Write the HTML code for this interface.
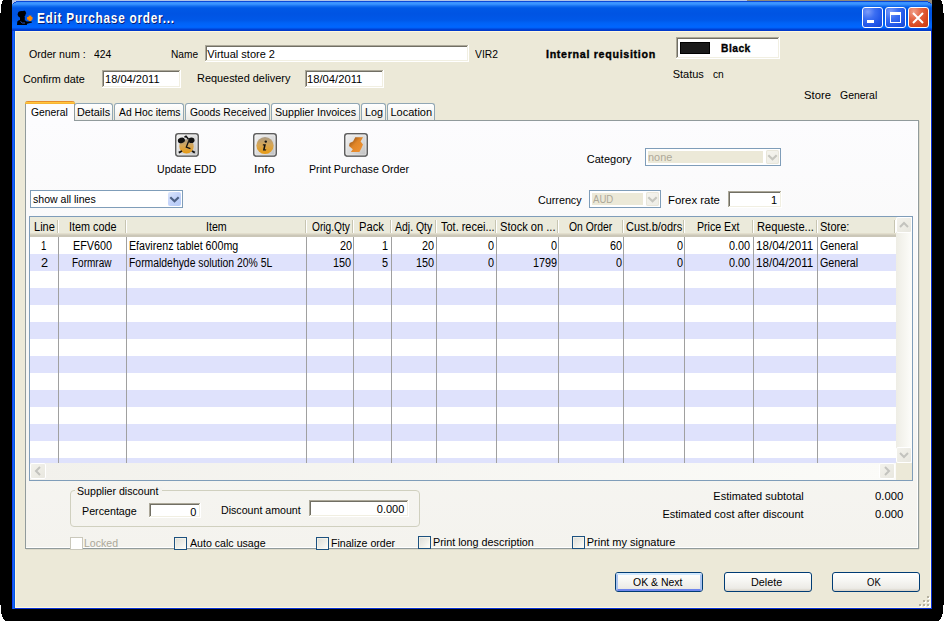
<!DOCTYPE html>
<html><head><meta charset="utf-8"><style>
html,body{margin:0;padding:0;width:944px;height:621px;overflow:hidden;background:#000;position:relative}
.a{position:absolute}
.t{position:absolute;font-family:"Liberation Sans",sans-serif;white-space:pre;transform-origin:0 0;color:#000}
</style></head><body>
<div class="a" style="left:12px;top:0px;width:920px;height:609px;background:#0831D9"></div><div class="a" style="left:12px;top:0;width:920px;height:31px;background:linear-gradient(to bottom,#B4C4E4 0px,#B4C4E4 1px,#0A48D8 1px,#0A48D8 2px,#3A93FF 2px,#3C95FF 4px,#2A83FA 5px,#1570F0 6px,#0A63EA 7px,#0058E6 8px,#0054E3 14px,#0058E8 20px,#0062F6 23px,#0066FF 27px,#0060F5 28px,#0044D8 29px,#0036C8 31px)"></div><div class="a" style="left:747px;top:0px;width:185px;height:1px;background:#908878"></div><div class="a" style="left:12px;top:1px;width:4px;height:1px;background:#B4C4E4"></div><div class="a" style="left:12px;top:2px;width:2px;height:1px;background:#B4C4E4"></div><div class="a" style="left:12px;top:3px;width:1px;height:1px;background:#B4C4E4"></div><div class="a" style="left:14px;top:2px;width:2px;height:1px;background:#0A48D8"></div><div class="a" style="left:13px;top:3px;width:1px;height:1px;background:#0A48D8"></div><div class="a" style="left:928px;top:1px;width:4px;height:1px;background:#908878"></div><div class="a" style="left:930px;top:2px;width:2px;height:1px;background:#908878"></div><div class="a" style="left:931px;top:3px;width:1px;height:1px;background:#908878"></div><div class="a" style="left:928px;top:2px;width:2px;height:1px;background:#0A48D8"></div><div class="a" style="left:930px;top:3px;width:1px;height:1px;background:#0A48D8"></div><div class="a" style="left:0px;top:0px;width:3px;height:1px;background:#fff"></div><div class="a" style="left:0px;top:1px;width:2px;height:3px;background:#fff"></div><div class="a" style="left:0px;top:4px;width:1px;height:9px;background:#fff"></div><div class="a" style="left:941px;top:0px;width:3px;height:1px;background:#fff"></div><div class="a" style="left:942px;top:1px;width:2px;height:3px;background:#fff"></div><div class="a" style="left:943px;top:4px;width:1px;height:9px;background:#fff"></div><div class="a" style="left:0px;top:605px;width:1px;height:9px;background:#fff"></div><div class="a" style="left:0px;top:614px;width:2px;height:3px;background:#fff"></div><div class="a" style="left:0px;top:617px;width:3px;height:2px;background:#fff"></div><div class="a" style="left:0px;top:619px;width:4px;height:1px;background:#fff"></div><div class="a" style="left:0px;top:620px;width:5px;height:1px;background:#fff"></div><div class="a" style="left:943px;top:605px;width:1px;height:9px;background:#fff"></div><div class="a" style="left:942px;top:614px;width:2px;height:3px;background:#fff"></div><div class="a" style="left:941px;top:617px;width:3px;height:2px;background:#fff"></div><div class="a" style="left:940px;top:619px;width:4px;height:1px;background:#fff"></div><div class="a" style="left:939px;top:620px;width:5px;height:1px;background:#fff"></div><div class="a" style="left:12px;top:31px;width:1px;height:578px;background:#0D3EF5"></div><div class="a" style="left:13px;top:31px;width:1px;height:578px;background:#166AEF"></div><div class="a" style="left:14px;top:31px;width:1px;height:578px;background:#0552E3"></div><div class="a" style="left:15px;top:31px;width:916px;height:577px;background:#FFF8DD"></div><div class="a" style="left:16px;top:32px;width:914px;height:575px;background:#ECE9D8"></div><svg class="a" style="left:14px;top:8px" width="22" height="20" viewBox="0 0 22 20">
<ellipse cx="7.6" cy="6.3" rx="3.9" ry="3.4" fill="#000"/>
<path d="M5.5 4.5 L10.3 2.6 L11.2 3.2 L12.3 5.2 L9.5 7.5 Z" fill="#000"/>
<rect x="6" y="9" width="4.8" height="3.5" fill="#000"/>
<path d="M3 17 L3.3 13.6 Q4.2 12 7.5 11.8 L11 12.2 L12.8 13.6 L17.6 13.4 L18 14.4 L13.2 15.8 L12.8 17 Z" fill="#000"/>
<path d="M6.5 13.5 Q8 15.8 11 15" stroke="#2A5BD8" stroke-width="0.9" fill="none"/>
<rect x="14.6" y="7.6" width="2.8" height="5.4" fill="#FF8A00"/>
<rect x="13.1" y="9" width="5.4" height="2.7" fill="#FF8A00"/>
</svg><div class="a" style="left:862px;top:7px;width:19px;height:19px;border:1px solid #fff;border-radius:3px;background:radial-gradient(circle at 25% 20%, #7C9CF9 0%, #3B6EF2 35%, #1F55E8 70%, #1646D2 100%)"></div><div class="a" style="left:867px;top:20px;width:7px;height:3px;background:#fff"></div><div class="a" style="left:885px;top:7px;width:19px;height:19px;border:1px solid #fff;border-radius:3px;background:radial-gradient(circle at 25% 20%, #7C9CF9 0%, #3B6EF2 35%, #1F55E8 70%, #1646D2 100%)"></div><div class="a" style="left:890px;top:12px;width:9px;height:7px;border:1px solid #fff;border-top:3px solid #fff"></div><div class="a" style="left:908px;top:7px;width:19px;height:19px;border:1px solid #fff;border-radius:3px;background:radial-gradient(circle at 25% 20%, #F0A08A 0%, #E46645 35%, #D9471F 70%, #C93B12 100%)"></div><svg class="a" style="left:912px;top:12px" width="12" height="12" viewBox="0 0 12 12"><path d="M1 1 L11 11 M11 1 L1 11" stroke="#fff" stroke-width="2"/></svg><div class="a" style="left:205px;top:45px;width:264px;height:17px;background:#fff"></div><div class="a" style="left:205px;top:45px;width:263px;height:1px;background:#ACA899"></div><div class="a" style="left:205px;top:45px;width:1px;height:16px;background:#ACA899"></div><div class="a" style="left:206px;top:46px;width:261px;height:1px;background:#716F64"></div><div class="a" style="left:206px;top:46px;width:1px;height:14px;background:#716F64"></div><div class="a" style="left:206px;top:60px;width:262px;height:1px;background:#F1EFE2"></div><div class="a" style="left:467px;top:46px;width:1px;height:15px;background:#F1EFE2"></div><div class="a" style="left:102px;top:70px;width:79px;height:18px;background:#fff"></div><div class="a" style="left:102px;top:70px;width:78px;height:1px;background:#ACA899"></div><div class="a" style="left:102px;top:70px;width:1px;height:17px;background:#ACA899"></div><div class="a" style="left:103px;top:71px;width:76px;height:1px;background:#716F64"></div><div class="a" style="left:103px;top:71px;width:1px;height:15px;background:#716F64"></div><div class="a" style="left:103px;top:86px;width:77px;height:1px;background:#F1EFE2"></div><div class="a" style="left:179px;top:71px;width:1px;height:16px;background:#F1EFE2"></div><div class="a" style="left:305px;top:70px;width:79px;height:18px;background:#fff"></div><div class="a" style="left:305px;top:70px;width:78px;height:1px;background:#ACA899"></div><div class="a" style="left:305px;top:70px;width:1px;height:17px;background:#ACA899"></div><div class="a" style="left:306px;top:71px;width:76px;height:1px;background:#716F64"></div><div class="a" style="left:306px;top:71px;width:1px;height:15px;background:#716F64"></div><div class="a" style="left:306px;top:86px;width:77px;height:1px;background:#F1EFE2"></div><div class="a" style="left:382px;top:71px;width:1px;height:16px;background:#F1EFE2"></div><div class="a" style="left:676px;top:37px;width:104px;height:22px;background:#fff"></div><div class="a" style="left:676px;top:37px;width:103px;height:1px;background:#ACA899"></div><div class="a" style="left:676px;top:37px;width:1px;height:21px;background:#ACA899"></div><div class="a" style="left:677px;top:38px;width:101px;height:1px;background:#716F64"></div><div class="a" style="left:677px;top:38px;width:1px;height:19px;background:#716F64"></div><div class="a" style="left:677px;top:57px;width:102px;height:1px;background:#F1EFE2"></div><div class="a" style="left:778px;top:38px;width:1px;height:20px;background:#F1EFE2"></div><div class="a" style="left:680px;top:42px;width:30px;height:12px;box-sizing:border-box;border:1px solid #000;background:#1A1A1A"></div><div class="a" style="left:25px;top:120px;width:894px;height:429px;background:#919B9C"></div><div class="a" style="left:26px;top:121px;width:892px;height:427px;background:linear-gradient(to bottom,#FCFCFE 0%,#F4F3EE 100%)"></div><div class="a" style="left:917px;top:121px;width:1px;height:427px;background:#fff"></div><div class="a" style="left:26px;top:547px;width:892px;height:1px;background:#fff"></div><div class="a" style="left:919px;top:121px;width:1px;height:428px;background:#DCD9C8"></div><div class="a" style="left:26px;top:549px;width:893px;height:1px;background:#DCD9C8"></div><div class="a" style="left:74px;top:103px;width:37px;height:16px;border:1px solid #91A7B4;border-bottom:none;border-radius:3px 3px 0 0;background:linear-gradient(to bottom,#FFFFFF 0%,#F7F7F4 50%,#ECEBE6 100%)"></div><div class="a" style="left:114px;top:103px;width:68px;height:16px;border:1px solid #91A7B4;border-bottom:none;border-radius:3px 3px 0 0;background:linear-gradient(to bottom,#FFFFFF 0%,#F7F7F4 50%,#ECEBE6 100%)"></div><div class="a" style="left:185px;top:103px;width:83px;height:16px;border:1px solid #91A7B4;border-bottom:none;border-radius:3px 3px 0 0;background:linear-gradient(to bottom,#FFFFFF 0%,#F7F7F4 50%,#ECEBE6 100%)"></div><div class="a" style="left:271px;top:103px;width:87px;height:16px;border:1px solid #91A7B4;border-bottom:none;border-radius:3px 3px 0 0;background:linear-gradient(to bottom,#FFFFFF 0%,#F7F7F4 50%,#ECEBE6 100%)"></div><div class="a" style="left:361px;top:103px;width:23px;height:16px;border:1px solid #91A7B4;border-bottom:none;border-radius:3px 3px 0 0;background:linear-gradient(to bottom,#FFFFFF 0%,#F7F7F4 50%,#ECEBE6 100%)"></div><div class="a" style="left:387px;top:103px;width:46px;height:16px;border:1px solid #91A7B4;border-bottom:none;border-radius:3px 3px 0 0;background:linear-gradient(to bottom,#FFFFFF 0%,#F7F7F4 50%,#ECEBE6 100%)"></div><div class="a" style="left:25px;top:101px;width:48px;height:20px;border:1px solid #919B9C;border-bottom:none;border-top:none;border-radius:3px 3px 0 0;background:#FCFCFE"></div><div class="a" style="left:25px;top:101px;width:50px;height:3px;border-radius:3px 3px 0 0;background:linear-gradient(to bottom,#E68B2C 0,#E68B2C 1px,#FFC73C 1px,#FFC73C 2px,#F7B335 2px)"></div><svg width="0" height="0" style="position:absolute"><defs><linearGradient id="ibg" x1="0" y1="0" x2="1" y2="1"><stop offset="0" stop-color="#F2F2F2"/><stop offset="0.55" stop-color="#DADADA"/><stop offset="1" stop-color="#BDBDBD"/></linearGradient><linearGradient id="org" x1="0" y1="0" x2="0" y2="1"><stop offset="0" stop-color="#A89A86"/><stop offset="0.45" stop-color="#D6A656"/><stop offset="1" stop-color="#E89A10"/></linearGradient><linearGradient id="prt" x1="0" y1="0" x2="1" y2="1"><stop offset="0" stop-color="#7A4010"/><stop offset="0.45" stop-color="#E08628"/><stop offset="1" stop-color="#F29434"/></linearGradient></defs></svg><svg class="a" style="left:175px;top:133px" width="24" height="24" viewBox="0 0 24 24"><rect x="0.8" y="0.8" width="22.4" height="22.2" rx="2.5" fill="url(#ibg)" stroke="#5E5E5E" stroke-width="1.6"/><path d="M2 23.2 L22 23.2" stroke="#6A6A6A" stroke-width="1"/><rect x="2" y="2" width="20" height="20" rx="1" fill="none" stroke="#F8F8F8" stroke-width="0.8" opacity="0.7"/><circle cx="11.5" cy="13.4" r="7.2" fill="url(#org)"/><ellipse cx="6.4" cy="7.4" rx="3.6" ry="2.7" transform="rotate(-20 6.4 7.4)" fill="#111"/><ellipse cx="16.4" cy="7.2" rx="3.1" ry="2.8" fill="#111"/><path d="M9.5 4.2 L11 3.3 L13.5 6.2" stroke="#111" stroke-width="1.6" fill="none"/><path d="M13.6 8.2 L11.3 14.2 L15.4 15.6" stroke="#111" stroke-width="1.3" fill="none"/><path d="M3.8 19.6 L7 18 M17 18 L19.8 19.6" stroke="#111" stroke-width="1.9"/></svg><svg class="a" style="left:253px;top:133px" width="24" height="24" viewBox="0 0 24 24"><rect x="0.8" y="0.8" width="22.4" height="22.2" rx="2.5" fill="url(#ibg)" stroke="#5E5E5E" stroke-width="1.6"/><path d="M2 23.2 L22 23.2" stroke="#6A6A6A" stroke-width="1"/><rect x="2" y="2" width="20" height="20" rx="1" fill="none" stroke="#F8F8F8" stroke-width="0.8" opacity="0.7"/><circle cx="12" cy="12.5" r="8.6" fill="url(#org)"/><circle cx="12.8" cy="8.6" r="1.2" fill="#111"/><path d="M9.9 11.3 L12.9 11.3 L11.7 16.4 L13.3 16.2 L12.9 17.6 L9.9 17.6 L11 12.6 L9.8 12.6 Z" fill="#111"/></svg><svg class="a" style="left:344px;top:133px" width="24" height="24" viewBox="0 0 24 24"><rect x="0.8" y="0.8" width="22.4" height="22.2" rx="2.5" fill="url(#ibg)" stroke="#5E5E5E" stroke-width="1.6"/><path d="M2 23.2 L22 23.2" stroke="#6A6A6A" stroke-width="1"/><rect x="2" y="2" width="20" height="20" rx="1" fill="none" stroke="#F8F8F8" stroke-width="0.8" opacity="0.7"/><path d="M11.3 4.2 L19 4.2 L16.6 8.4 L19 11.5 L17.3 15.6 L15.4 19 L6.9 19 L8.8 16.3 L5 13 L5.7 10 L9 8.6 Z" fill="url(#prt)"/></svg><div class="a" style="left:30px;top:190px;width:153px;height:18px;box-sizing:border-box;border:1px solid #7F9DB9;background:#fff"></div><div class="a" style="left:168px;top:192px;width:13px;height:14px;border-radius:2px;background:linear-gradient(135deg,#DCE6FC 0%,#C3D3FA 50%,#B4CAF7 100%)"></div><svg class="a" style="left:168px;top:192px" width="13" height="14" viewBox="0 0 13 14"><path d="M2.3 5.2 L6.5 9.3 L10.7 5.2" stroke="#4D6185" stroke-width="2.2" fill="none"/></svg><div class="a" style="left:645px;top:148px;width:136px;height:18px;box-sizing:border-box;border:1px solid #7F9DB9;background:#fff"></div><div class="a" style="left:648px;top:151px;width:115px;height:12px;background:#ECE9D8"></div><div class="a" style="left:766px;top:150px;width:13px;height:14px;border-radius:2px;background:linear-gradient(135deg,#F5F4EE 0%,#EEEDE6 100%);box-shadow:inset 0 0 0 1px #E8E6DA"></div><svg class="a" style="left:766px;top:150px" width="13" height="14" viewBox="0 0 13 14"><path d="M2.3 5.2 L6.5 9.3 L10.7 5.2" stroke="#C6C6BF" stroke-width="2.2" fill="none"/></svg><div class="a" style="left:589px;top:190px;width:72px;height:18px;box-sizing:border-box;border:1px solid #7F9DB9;background:#fff"></div><div class="a" style="left:592px;top:193px;width:51px;height:12px;background:#ECE9D8"></div><div class="a" style="left:646px;top:192px;width:13px;height:14px;border-radius:2px;background:linear-gradient(135deg,#F5F4EE 0%,#EEEDE6 100%);box-shadow:inset 0 0 0 1px #E8E6DA"></div><svg class="a" style="left:646px;top:192px" width="13" height="14" viewBox="0 0 13 14"><path d="M2.3 5.2 L6.5 9.3 L10.7 5.2" stroke="#C6C6BF" stroke-width="2.2" fill="none"/></svg><div class="a" style="left:728px;top:191px;width:54px;height:17px;background:#fff"></div><div class="a" style="left:728px;top:191px;width:53px;height:1px;background:#ACA899"></div><div class="a" style="left:728px;top:191px;width:1px;height:16px;background:#ACA899"></div><div class="a" style="left:729px;top:192px;width:51px;height:1px;background:#716F64"></div><div class="a" style="left:729px;top:192px;width:1px;height:14px;background:#716F64"></div><div class="a" style="left:729px;top:206px;width:52px;height:1px;background:#F1EFE2"></div><div class="a" style="left:780px;top:192px;width:1px;height:15px;background:#F1EFE2"></div><div class="a" style="left:29px;top:216px;width:884px;height:265px;background:#7F9DB9"></div><div class="a" style="left:30px;top:217px;width:882px;height:263px;background:#fff"></div><div class="a" style="left:30px;top:254px;width:866px;height:17px;background:#DFE2FC"></div><div class="a" style="left:30px;top:288px;width:866px;height:17px;background:#DFE2FC"></div><div class="a" style="left:30px;top:322px;width:866px;height:17px;background:#DFE2FC"></div><div class="a" style="left:30px;top:356px;width:866px;height:17px;background:#DFE2FC"></div><div class="a" style="left:30px;top:390px;width:866px;height:17px;background:#DFE2FC"></div><div class="a" style="left:30px;top:424px;width:866px;height:17px;background:#DFE2FC"></div><div class="a" style="left:30px;top:458px;width:866px;height:5px;background:#DFE2FC"></div><div class="a" style="left:58px;top:237px;width:1px;height:226px;background:#A0A0A0"></div><div class="a" style="left:126px;top:237px;width:1px;height:226px;background:#A0A0A0"></div><div class="a" style="left:306px;top:237px;width:1px;height:226px;background:#A0A0A0"></div><div class="a" style="left:353px;top:237px;width:1px;height:226px;background:#A0A0A0"></div><div class="a" style="left:391px;top:237px;width:1px;height:226px;background:#A0A0A0"></div><div class="a" style="left:436px;top:237px;width:1px;height:226px;background:#A0A0A0"></div><div class="a" style="left:496px;top:237px;width:1px;height:226px;background:#A0A0A0"></div><div class="a" style="left:558px;top:237px;width:1px;height:226px;background:#A0A0A0"></div><div class="a" style="left:623px;top:237px;width:1px;height:226px;background:#A0A0A0"></div><div class="a" style="left:684px;top:237px;width:1px;height:226px;background:#A0A0A0"></div><div class="a" style="left:753px;top:237px;width:1px;height:226px;background:#A0A0A0"></div><div class="a" style="left:817px;top:237px;width:1px;height:226px;background:#A0A0A0"></div><div class="a" style="left:30px;top:217px;width:866px;height:20px;background:linear-gradient(to bottom,#EBEADB 0px,#EBEADB 16px,#E2DECD 16px,#E2DECD 17px,#D6D2C2 17px,#D6D2C2 18px,#CBC7B8 18px)"></div><div class="a" style="left:57px;top:220px;width:1px;height:13px;background:#C7C5B2"></div><div class="a" style="left:58px;top:220px;width:1px;height:13px;background:#fff"></div><div class="a" style="left:125px;top:220px;width:1px;height:13px;background:#C7C5B2"></div><div class="a" style="left:126px;top:220px;width:1px;height:13px;background:#fff"></div><div class="a" style="left:305px;top:220px;width:1px;height:13px;background:#C7C5B2"></div><div class="a" style="left:306px;top:220px;width:1px;height:13px;background:#fff"></div><div class="a" style="left:352px;top:220px;width:1px;height:13px;background:#C7C5B2"></div><div class="a" style="left:353px;top:220px;width:1px;height:13px;background:#fff"></div><div class="a" style="left:390px;top:220px;width:1px;height:13px;background:#C7C5B2"></div><div class="a" style="left:391px;top:220px;width:1px;height:13px;background:#fff"></div><div class="a" style="left:435px;top:220px;width:1px;height:13px;background:#C7C5B2"></div><div class="a" style="left:436px;top:220px;width:1px;height:13px;background:#fff"></div><div class="a" style="left:495px;top:220px;width:1px;height:13px;background:#C7C5B2"></div><div class="a" style="left:496px;top:220px;width:1px;height:13px;background:#fff"></div><div class="a" style="left:557px;top:220px;width:1px;height:13px;background:#C7C5B2"></div><div class="a" style="left:558px;top:220px;width:1px;height:13px;background:#fff"></div><div class="a" style="left:622px;top:220px;width:1px;height:13px;background:#C7C5B2"></div><div class="a" style="left:623px;top:220px;width:1px;height:13px;background:#fff"></div><div class="a" style="left:683px;top:220px;width:1px;height:13px;background:#C7C5B2"></div><div class="a" style="left:684px;top:220px;width:1px;height:13px;background:#fff"></div><div class="a" style="left:752px;top:220px;width:1px;height:13px;background:#C7C5B2"></div><div class="a" style="left:753px;top:220px;width:1px;height:13px;background:#fff"></div><div class="a" style="left:816px;top:220px;width:1px;height:13px;background:#C7C5B2"></div><div class="a" style="left:817px;top:220px;width:1px;height:13px;background:#fff"></div><div class="a" style="left:894px;top:220px;width:1px;height:13px;background:#C7C5B2"></div><div class="a" style="left:895px;top:220px;width:1px;height:13px;background:#fff"></div><div class="a" style="left:896px;top:217px;width:16px;height:246px;background:linear-gradient(to right,#EEEDE5,#FDFDFA)"></div><div class="a" style="left:896px;top:217px;width:14px;height:14px;border:1px solid #fff;border-radius:2px;background:linear-gradient(135deg,#F3F2EC 0%,#E8E7DF 100%)"></div><svg class="a" style="left:898px;top:219px" width="12" height="12" viewBox="-6 -6 12 12"><path d="M-4 2 L0 -2 L4 2" stroke="#C3C3BE" stroke-width="2" fill="none"/></svg><div class="a" style="left:896px;top:447px;width:14px;height:14px;border:1px solid #fff;border-radius:2px;background:linear-gradient(135deg,#F3F2EC 0%,#E8E7DF 100%)"></div><svg class="a" style="left:898px;top:449px" width="12" height="12" viewBox="-6 -6 12 12"><path d="M-4 -2 L0 2 L4 -2" stroke="#C3C3BE" stroke-width="2" fill="none"/></svg><div class="a" style="left:30px;top:463px;width:866px;height:17px;background:linear-gradient(to right,#F2F1EC,#FBFBF8)"></div><div class="a" style="left:30px;top:463px;width:14px;height:14px;border:1px solid #fff;border-radius:2px;background:linear-gradient(135deg,#F3F2EC 0%,#E8E7DF 100%)"></div><svg class="a" style="left:32px;top:465px" width="12" height="12" viewBox="-6 -6 12 12"><path d="M2 -4 L-2 0 L2 4" stroke="#C3C3BE" stroke-width="2" fill="none"/></svg><div class="a" style="left:879px;top:463px;width:14px;height:14px;border:1px solid #fff;border-radius:2px;background:linear-gradient(135deg,#F3F2EC 0%,#E8E7DF 100%)"></div><svg class="a" style="left:881px;top:465px" width="12" height="12" viewBox="-6 -6 12 12"><path d="M-2 -4 L2 0 L-2 4" stroke="#C3C3BE" stroke-width="2" fill="none"/></svg><div class="a" style="left:896px;top:463px;width:16px;height:17px;background:#ECE9D8"></div><div class="a" style="left:70px;top:490px;width:348px;height:35px;border:1px solid #D0D0BF;border-radius:4px"></div><div class="a" style="left:75px;top:488px;width:87px;height:6px;background:#F3F2EE"></div><div class="a" style="left:149px;top:503px;width:52px;height:15px;background:#fff"></div><div class="a" style="left:149px;top:503px;width:51px;height:1px;background:#ACA899"></div><div class="a" style="left:149px;top:503px;width:1px;height:14px;background:#ACA899"></div><div class="a" style="left:150px;top:504px;width:49px;height:1px;background:#716F64"></div><div class="a" style="left:150px;top:504px;width:1px;height:12px;background:#716F64"></div><div class="a" style="left:150px;top:516px;width:50px;height:1px;background:#F1EFE2"></div><div class="a" style="left:199px;top:504px;width:1px;height:13px;background:#F1EFE2"></div><div class="a" style="left:309px;top:500px;width:100px;height:17px;background:#fff"></div><div class="a" style="left:309px;top:500px;width:99px;height:1px;background:#ACA899"></div><div class="a" style="left:309px;top:500px;width:1px;height:16px;background:#ACA899"></div><div class="a" style="left:310px;top:501px;width:97px;height:1px;background:#716F64"></div><div class="a" style="left:310px;top:501px;width:1px;height:14px;background:#716F64"></div><div class="a" style="left:310px;top:515px;width:98px;height:1px;background:#F1EFE2"></div><div class="a" style="left:407px;top:501px;width:1px;height:15px;background:#F1EFE2"></div><div class="a" style="left:615px;top:572px;width:86px;height:18px;border:1px solid #003C74;border-radius:3px;background:linear-gradient(to bottom,#FFFFFF 0%,#F7F7F4 40%,#ECEBE6 85%,#D6D0C5 100%)"></div><div class="a" style="left:616px;top:573px;width:82px;height:14px;border:2px solid #A7C2F0;border-top-color:#CEE7FF;border-bottom-color:#6982EE;border-radius:2px;opacity:0.95"></div><div class="a" style="left:724px;top:572px;width:86px;height:18px;border:1px solid #003C74;border-radius:3px;background:linear-gradient(to bottom,#FFFFFF 0%,#F7F7F4 40%,#ECEBE6 85%,#D6D0C5 100%)"></div><div class="a" style="left:832px;top:572px;width:86px;height:18px;border:1px solid #003C74;border-radius:3px;background:linear-gradient(to bottom,#FFFFFF 0%,#F7F7F4 40%,#ECEBE6 85%,#D6D0C5 100%)"></div><div class="a" style="left:928px;top:597px;width:2px;height:2px;background:#FFFFFF"></div><div class="a" style="left:927px;top:596px;width:2px;height:2px;background:#B5B1A0"></div><div class="a" style="left:924px;top:601px;width:2px;height:2px;background:#FFFFFF"></div><div class="a" style="left:923px;top:600px;width:2px;height:2px;background:#B5B1A0"></div><div class="a" style="left:928px;top:601px;width:2px;height:2px;background:#FFFFFF"></div><div class="a" style="left:927px;top:600px;width:2px;height:2px;background:#B5B1A0"></div><div class="a" style="left:920px;top:605px;width:2px;height:2px;background:#FFFFFF"></div><div class="a" style="left:919px;top:604px;width:2px;height:2px;background:#B5B1A0"></div><div class="a" style="left:924px;top:605px;width:2px;height:2px;background:#FFFFFF"></div><div class="a" style="left:923px;top:604px;width:2px;height:2px;background:#B5B1A0"></div><div class="a" style="left:928px;top:605px;width:2px;height:2px;background:#FFFFFF"></div><div class="a" style="left:927px;top:604px;width:2px;height:2px;background:#B5B1A0"></div>
<div class="a" style="left:70px;top:537px;width:11px;height:11px;border:1px solid #CAC8BB;background:#fff"></div><div class="a" style="left:174px;top:537px;width:11px;height:11px;border:1px solid #1C5180;background:linear-gradient(135deg,#DCDCD7 0%,#F0F0EA 60%,#FFFFFF 100%);box-shadow:inset 0 0 0 1px rgba(255,250,235,0.6)"></div><div class="a" style="left:316px;top:537px;width:11px;height:11px;border:1px solid #1C5180;background:linear-gradient(135deg,#DCDCD7 0%,#F0F0EA 60%,#FFFFFF 100%);box-shadow:inset 0 0 0 1px rgba(255,250,235,0.6)"></div><div class="a" style="left:418px;top:536px;width:11px;height:11px;border:1px solid #1C5180;background:linear-gradient(135deg,#DCDCD7 0%,#F0F0EA 60%,#FFFFFF 100%);box-shadow:inset 0 0 0 1px rgba(255,250,235,0.6)"></div><div class="a" style="left:572px;top:536px;width:11px;height:11px;border:1px solid #1C5180;background:linear-gradient(135deg,#DCDCD7 0%,#F0F0EA 60%,#FFFFFF 100%);box-shadow:inset 0 0 0 1px rgba(255,250,235,0.6)"></div>
<div class="t" style="left:29.00px;top:47.00px;font-size:11px;line-height:15px;transform:scaleX(0.9655)">Order num :</div><div class="t" style="left:93.80px;top:47.00px;font-size:11px;line-height:15px;transform:scaleX(0.9444)">424</div><div class="t" style="left:170.88px;top:47.00px;font-size:11px;line-height:15px;transform:scaleX(0.9214)">Name</div><div class="t" style="left:207.30px;top:47.00px;font-size:11px;line-height:15px">Virtual store 2</div><div class="t" style="left:474.50px;top:47.00px;font-size:11px;line-height:15px;transform:scaleX(0.9375)">VIR2</div><div class="t" style="left:546.03px;top:47.00px;font-size:11px;line-height:15px;font-weight:bold;-webkit-text-stroke:0.35px #000;letter-spacing:0.7px;transform:scaleX(0.9730)">Internal requisition</div><div class="t" style="left:721.07px;top:41.00px;font-size:11px;line-height:15px;font-weight:bold;-webkit-text-stroke:0.35px #000;letter-spacing:0.5px;transform:scaleX(0.9333)">Black</div><div class="t" style="left:672.70px;top:67.00px;font-size:11px;line-height:15px">Status</div><div class="t" style="left:712.70px;top:67.00px;font-size:11px;line-height:15px;transform:scaleX(0.9273)">cn</div><div class="t" style="left:23.02px;top:71.50px;font-size:11px;line-height:15px;transform:scaleX(0.9823)">Confirm date</div><div class="t" style="left:104.69px;top:71.70px;font-size:11px;line-height:15px;transform:scaleX(1.0057)">18/04/2011</div><div class="t" style="left:196.51px;top:71.20px;font-size:11px;line-height:15px;transform:scaleX(0.9914)">Requested delivery</div><div class="t" style="left:307.28px;top:71.70px;font-size:11px;line-height:15px;transform:scaleX(1.0208)">18/04/2011</div><div class="t" style="left:804.38px;top:88.20px;font-size:11px;line-height:15px;transform:scaleX(1.0240)">Store</div><div class="t" style="left:839.50px;top:88.20px;font-size:11px;line-height:15px;transform:scaleX(0.9513)">General</div><div class="t" style="left:30.80px;top:105.00px;font-size:11px;line-height:15px;transform:scaleX(0.9385)">General</div><div class="t" style="left:76.62px;top:105.00px;font-size:11px;line-height:15px;transform:scaleX(0.9844)">Details</div><div class="t" style="left:118.90px;top:105.00px;font-size:11px;line-height:15px;transform:scaleX(0.9385)">Ad Hoc items</div><div class="t" style="left:189.90px;top:105.00px;font-size:11px;line-height:15px;transform:scaleX(0.9407)">Goods Received</div><div class="t" style="left:274.93px;top:105.00px;font-size:11px;line-height:15px;transform:scaleX(0.9675)">Supplier Invoices</div><div class="t" style="left:364.62px;top:105.00px;font-size:11px;line-height:15px;transform:scaleX(0.9765)">Log</div><div class="t" style="left:390.50px;top:105.00px;font-size:11px;line-height:15px">Location</div><div class="t" style="left:156.74px;top:161.50px;font-size:11px;line-height:15px;transform:scaleX(0.9600)">Update EDD</div><div class="t" style="left:253.78px;top:161.50px;font-size:11px;line-height:15px;transform:scaleX(1.1176)">Info</div><div class="t" style="left:308.93px;top:161.70px;font-size:11px;line-height:15px;transform:scaleX(0.9676)">Print Purchase Order</div><div class="t" style="left:32.64px;top:191.70px;font-size:11px;line-height:15px;transform:scaleX(0.9578)">show all lines</div><div class="t" style="left:586.80px;top:152.00px;font-size:11px;line-height:15px">Category</div><div class="t" style="left:648.01px;top:150.00px;font-size:11px;line-height:15px;color:#ACA899;transform:scaleX(0.9913)">none</div><div class="t" style="left:537.82px;top:192.70px;font-size:11px;line-height:15px;transform:scaleX(0.9773)">Currency</div><div class="t" style="left:593.00px;top:191.50px;font-size:11px;line-height:15px;color:#ACA899;transform:scaleX(0.8696)">AUD</div><div class="t" style="left:667.57px;top:192.70px;font-size:11px;line-height:15px;transform:scaleX(1.0347)">Forex rate</div><div class="t" style="left:771.00px;top:192.70px;font-size:11px;line-height:15px">1</div><div class="t" style="left:33.88px;top:219.00px;font-size:12px;line-height:16px;transform:scaleX(0.9190)">Line</div><div class="t" style="left:69.00px;top:219.00px;font-size:12px;line-height:16px;transform:scaleX(0.9020)">Item code</div><div class="t" style="left:205.51px;top:219.00px;font-size:12px;line-height:16px;transform:scaleX(0.8864)">Item</div><div class="t" style="left:311.70px;top:219.00px;font-size:12px;line-height:16px;transform:scaleX(0.8467)">Orig.Qty</div><div class="t" style="left:359.47px;top:219.00px;font-size:12px;line-height:16px;transform:scaleX(0.9346)">Pack</div><div class="t" style="left:394.90px;top:219.00px;font-size:12px;line-height:16px;transform:scaleX(0.8721)">Adj. Qty</div><div class="t" style="left:440.90px;top:219.00px;font-size:12px;line-height:16px;transform:scaleX(0.9138)">Tot. recei...</div><div class="t" style="left:499.68px;top:219.00px;font-size:12px;line-height:16px;transform:scaleX(0.9241)">Stock on ...</div><div class="t" style="left:569.40px;top:219.00px;font-size:12px;line-height:16px;transform:scaleX(0.8620)">On Order</div><div class="t" style="left:626.38px;top:219.00px;font-size:12px;line-height:16px;transform:scaleX(0.9150)">Cust.b/odrs</div><div class="t" style="left:696.92px;top:219.00px;font-size:12px;line-height:16px;transform:scaleX(0.8830)">Price Ext</div><div class="t" style="left:756.67px;top:219.00px;font-size:12px;line-height:16px;transform:scaleX(0.9271)">Requeste...</div><div class="t" style="left:820.28px;top:219.00px;font-size:12px;line-height:16px;transform:scaleX(0.9167)">Store:</div><div class="t" style="left:40.90px;top:238.00px;font-size:12px;line-height:16px;transform:scaleX(0.8000)">1</div><div class="t" style="left:72.70px;top:238.00px;font-size:12px;line-height:16px;transform:scaleX(0.9000)">EFV600</div><div class="t" style="left:128.61px;top:238.00px;font-size:12px;line-height:16px;transform:scaleX(0.8901)">Efavirenz tablet 600mg</div><div class="t" style="left:339.76px;top:238.00px;font-size:12px;line-height:16px;transform:scaleX(0.9031)">20</div><div class="t" style="left:382.48px;top:238.00px;font-size:12px;line-height:16px;transform:scaleX(0.9031)">1</div><div class="t" style="left:422.36px;top:238.00px;font-size:12px;line-height:16px;transform:scaleX(0.9031)">20</div><div class="t" style="left:488.48px;top:238.00px;font-size:12px;line-height:16px;transform:scaleX(0.9031)">0</div><div class="t" style="left:550.88px;top:238.00px;font-size:12px;line-height:16px;transform:scaleX(0.9031)">0</div><div class="t" style="left:609.66px;top:238.00px;font-size:12px;line-height:16px;transform:scaleX(0.9031)">60</div><div class="t" style="left:676.78px;top:238.00px;font-size:12px;line-height:16px;transform:scaleX(0.9031)">0</div><div class="t" style="left:729.23px;top:238.00px;font-size:12px;line-height:16px;transform:scaleX(0.9031)">0.00</div><div class="t" style="left:755.73px;top:238.00px;font-size:12px;line-height:16px;transform:scaleX(0.9672)">18/04/2011</div><div class="t" style="left:819.81px;top:238.00px;font-size:12px;line-height:16px;transform:scaleX(0.8927)">General</div><div class="t" style="left:40.64px;top:255.00px;font-size:12px;line-height:16px;transform:scaleX(1.0600)">2</div><div class="t" style="left:72.07px;top:255.00px;font-size:12px;line-height:16px;transform:scaleX(0.8340)">Formraw</div><div class="t" style="left:128.63px;top:255.00px;font-size:12px;line-height:16px;transform:scaleX(0.8659)">Formaldehyde solution 20% 5L</div><div class="t" style="left:333.44px;top:255.00px;font-size:12px;line-height:16px;transform:scaleX(0.9031)">150</div><div class="t" style="left:382.48px;top:255.00px;font-size:12px;line-height:16px;transform:scaleX(0.9031)">5</div><div class="t" style="left:416.04px;top:255.00px;font-size:12px;line-height:16px;transform:scaleX(0.9031)">150</div><div class="t" style="left:488.48px;top:255.00px;font-size:12px;line-height:16px;transform:scaleX(0.9031)">0</div><div class="t" style="left:532.82px;top:255.00px;font-size:12px;line-height:16px;transform:scaleX(0.9031)">1799</div><div class="t" style="left:615.98px;top:255.00px;font-size:12px;line-height:16px;transform:scaleX(0.9031)">0</div><div class="t" style="left:676.78px;top:255.00px;font-size:12px;line-height:16px;transform:scaleX(0.9031)">0</div><div class="t" style="left:729.23px;top:255.00px;font-size:12px;line-height:16px;transform:scaleX(0.9031)">0.00</div><div class="t" style="left:755.73px;top:255.00px;font-size:12px;line-height:16px;transform:scaleX(0.9672)">18/04/2011</div><div class="t" style="left:819.81px;top:255.00px;font-size:12px;line-height:16px;transform:scaleX(0.8927)">General</div><div class="t" style="left:77.03px;top:484.00px;font-size:11px;line-height:15px;transform:scaleX(0.9651)">Supplier discount</div><div class="t" style="left:82.13px;top:504.00px;font-size:11px;line-height:15px;transform:scaleX(0.9727)">Percentage</div><div class="t" style="left:190.30px;top:505.00px;font-size:11px;line-height:15px">0</div><div class="t" style="left:220.73px;top:503.00px;font-size:11px;line-height:15px;transform:scaleX(0.9659)">Discount amount</div><div class="t" style="left:376.80px;top:502.00px;font-size:11px;line-height:15px">0.000</div><div class="t" style="left:713.30px;top:489.00px;font-size:11px;line-height:15px">Estimated subtotal</div><div class="t" style="left:662.40px;top:507.00px;font-size:11px;line-height:15px">Estimated cost after discount</div><div class="t" style="left:875.10px;top:489.00px;font-size:11px;line-height:15px;transform:scaleX(1.0296)">0.000</div><div class="t" style="left:875.10px;top:507.00px;font-size:11px;line-height:15px;transform:scaleX(1.0296)">0.000</div><div class="t" style="left:84.24px;top:536.00px;font-size:11px;line-height:15px;color:#ACA899;transform:scaleX(0.9588)">Locked</div><div class="t" style="left:189.80px;top:536.00px;font-size:11px;line-height:15px;transform:scaleX(0.9654)">Auto calc usage</div><div class="t" style="left:330.54px;top:536.00px;font-size:11px;line-height:15px;transform:scaleX(0.9621)">Finalize order</div><div class="t" style="left:432.72px;top:535.00px;font-size:11px;line-height:15px;transform:scaleX(0.9812)">Print long description</div><div class="t" style="left:586.70px;top:535.00px;font-size:11px;line-height:15px">Print my signature</div><div class="t" style="left:632.80px;top:574.80px;font-size:11px;line-height:15px;transform:scaleX(0.9500)">OK &amp; Next</div><div class="t" style="left:750.82px;top:574.80px;font-size:11px;line-height:15px;transform:scaleX(0.9806)">Delete</div><div class="t" style="left:867.30px;top:574.80px;font-size:11px;line-height:15px;transform:scaleX(0.8625)">OK</div><div class="t" style="left:37.06px;top:9.00px;font-size:14px;line-height:18px;font-weight:bold;letter-spacing:0.9px;color:#fff;transform:scaleX(0.8422);text-shadow:1px 1px 0 #0A1A70">Edit Purchase order...</div>
</body></html>
